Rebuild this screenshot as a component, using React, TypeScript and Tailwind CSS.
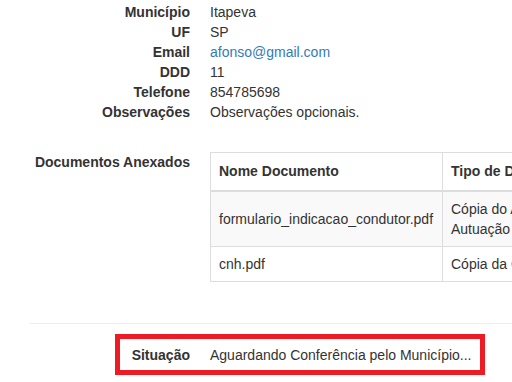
const fields = [
  { label: "Município", value: "Itapeva" },
  { label: "UF", value: "SP" },
  { label: "Email", value: "afonso@gmail.com", link: true },
  { label: "DDD", value: "11" },
  { label: "Telefone", value: "854785698" },
  { label: "Observações", value: "Observações opcionais." },
];

const docs = [
  { nome: "formulario_indicacao_condutor.pdf", tipo: "Cópia do Auto de Autuação" },
  { nome: "cnh.pdf", tipo: "Cópia da CNH" },
];

export default function App() {
  return (
    <div className="relative w-[512px] h-[382px] overflow-hidden bg-white font-['Liberation_Sans',Arial,sans-serif] text-[14px] leading-[20px] text-[#333]">
      <div className="pl-[30px] pt-[2px]">
        {/* Dados */}
        <dl>
          {fields.map((f) => (
            <div key={f.label} className="flex">
              <dt className="w-[160px] shrink-0 text-right font-bold">{f.label}</dt>
              <dd className="ml-[20px] whitespace-nowrap">
                {f.link ? <a className="text-[#337ab7]">{f.value}</a> : f.value}
              </dd>
            </div>
          ))}
        </dl>

        {/* Documentos */}
        <div className="flex mt-[30px]">
          <div className="w-[160px] shrink-0 text-right font-bold">Documentos Anexados</div>
          <div className="ml-[20px] shrink-0">
            <table className="border-collapse border border-[#ddd]">
              <thead>
                <tr>
                  <th className="w-[232px] text-left font-bold px-[8px] pt-[8px] pb-[9px] border border-[#ddd] border-b-2">
                    Nome Documento
                  </th>
                  <th className="w-[150px] text-left font-bold px-[8px] pt-[8px] pb-[9px] border border-[#ddd] border-b-2 whitespace-nowrap">
                    Tipo de Documento
                  </th>
                </tr>
              </thead>
              <tbody>
                {docs.map((d, i) => (
                  <tr key={d.nome} className={i % 2 === 0 ? "bg-[#f9f9f9]" : ""}>
                    <td className="px-[8px] py-[7px] border border-[#ddd] align-middle whitespace-nowrap">{d.nome}</td>
                    <td className="w-[134px] px-[8px] py-[7px] border border-[#ddd] align-middle">
                      <div className="w-[124px]">{d.tipo}</div>
                    </td>
                  </tr>
                ))}
              </tbody>
            </table>
          </div>
        </div>

        <hr className="mt-[41px] border-0 border-t border-[#eee]" />

        {/* Situação */}
        <div className="flex mt-[21px]">
          <div className="w-[160px] shrink-0 text-right font-bold">Situação</div>
          <div className="ml-[20px] whitespace-nowrap">Aguardando Conferência pelo Município...</div>
        </div>
      </div>

      {/* destaque */}
      <div className="absolute left-[115px] top-[334px] w-[370px] h-[41px] border-[5px] border-[#ed1c24]" />
    </div>
  );
}
